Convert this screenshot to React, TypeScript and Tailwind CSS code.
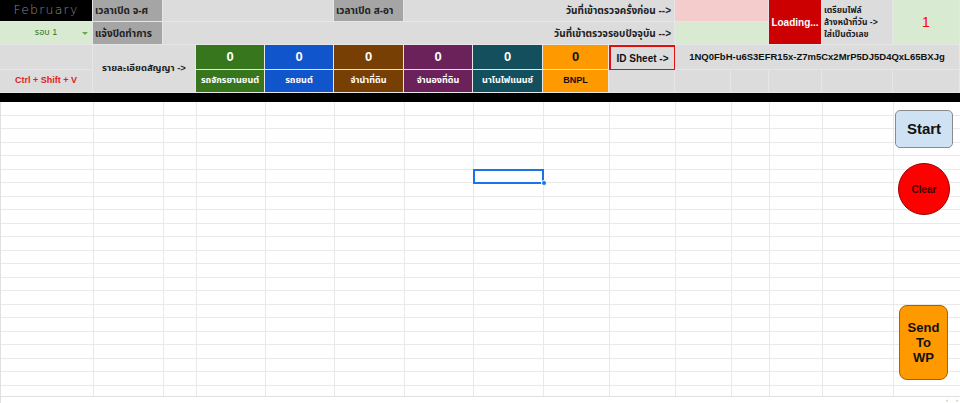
import React from "react";

const COLS =
  "grid grid-cols-[93px_70px_33px_69px_69px_70px_69px_70px_66px_66px_56px_38px_53px_71px_67px]";

const thai = {
  fontFamily:
    '"Liberation Sans", "Noto Sans Thai", "Noto Sans Thai UI", "Noto Sans", Loma, Garuda, "Tlwg Typo", Tahoma, sans-serif',
};

function Cell({
  className = "",
  children,
}: {
  className?: string;
  children?: React.ReactNode;
}) {
  return (
    <div
      className={
        "flex items-center overflow-hidden whitespace-nowrap border-r border-b border-[#e6e6e6] " +
        className
      }
    >
      {children}
    </div>
  );
}

export default function App() {
  const rows = Array.from({ length: 22 });
  const cols = Array.from({ length: 15 });
  return (
    <div
      className="relative w-[960px] h-[403px] overflow-hidden bg-white text-[#111]"
      style={thai}
    >
      {/* Header */}
      <div className={COLS + " grid-rows-[22px_23px_25px_23px_9px]"}>
        {/* Row 1 */}
        <Cell className="col-start-1 row-start-1 bg-black justify-center border-[#333]">
          <span
            className="text-[12.5px] tracking-[1.2px] text-[#8a8a8a]"
            style={{ fontFamily: '"DejaVu Sans", sans-serif', fontWeight: 300 }}
          >
            February
          </span>
        </Cell>
        <Cell className="col-start-2 row-start-1 bg-[#a5a5a5] pl-[2px]">
          <span className="text-[10px] font-bold text-[#222]">เวลาเปิด จ-ศ</span>
        </Cell>
        <Cell className="col-start-3 col-span-3 row-start-1 bg-[#dcdcdc]" />
        <Cell className="col-start-6 row-start-1 bg-[#a5a5a5] pl-[2px]">
          <span className="text-[10px] font-bold text-[#222]">เวลาเปิด ส-อา</span>
        </Cell>
        <Cell className="col-start-7 col-span-4 row-start-1 bg-[#dcdcdc] justify-end pr-[3px]">
          <span className="text-[10px] font-bold text-[#222]">
            วันที่เข้าตรวจครั้งก่อน --&gt;
          </span>
        </Cell>
        <Cell className="col-start-11 col-span-2 row-start-1 bg-[#f4cccc]" />
        <Cell className="col-start-13 row-start-1 row-span-2 bg-[#cc0000] justify-center">
          <span className="text-[10px] font-bold text-white">Loading...</span>
        </Cell>
        <Cell className="col-start-14 row-start-1 row-span-2 bg-[#dcdcdc] pl-[2px]">
          <span className="text-[8.5px] font-bold leading-[12px] text-[#222] whitespace-normal">
            เตรียมไฟล์
            <br />
            ล้างหน้าที่วัน -&gt;
            <br />
            ใส่เป็นตัวเลข
          </span>
        </Cell>
        <Cell className="col-start-15 row-start-1 row-span-2 bg-[#d9ead3] justify-center">
          <span className="text-[14px] text-[#ff0000]">1</span>
        </Cell>

        {/* Row 2 */}
        <Cell className="col-start-1 row-start-2 bg-[#d9ead3] justify-center relative">
          <span className="text-[9px] text-[#38761d]">รอบ 1</span>
          <span className="absolute right-[4px] top-[10px] w-0 h-0 border-l-[3px] border-r-[3px] border-t-[3px] border-l-transparent border-r-transparent border-t-[#6aa84f]" />
        </Cell>
        <Cell className="col-start-2 row-start-2 bg-[#a5a5a5] pl-[2px]">
          <span className="text-[10px] font-bold text-[#222]">แจ้งปิดทำการ</span>
        </Cell>
        <Cell className="col-start-3 col-span-8 row-start-2 bg-[#dcdcdc] justify-end pr-[3px]">
          <span className="text-[10px] font-bold text-[#222]">
            วันที่เข้าตรวจรอบปัจจุบัน --&gt;
          </span>
        </Cell>
        <Cell className="col-start-11 col-span-2 row-start-2 bg-[#d9ead3]" />

        {/* Row 3 */}
        <Cell className="col-start-1 row-start-3 bg-[#dcdcdc]" />
        <Cell className="col-start-2 col-span-2 row-start-3 row-span-2 bg-[#dcdcdc] justify-center">
          <span className="text-[9.5px] font-bold text-[#222]">รายละเอียดสัญญา -&gt;</span>
        </Cell>
        <Cell className="col-start-4 row-start-3 bg-[#38761d] justify-center">
          <span className="text-[13px] font-bold text-white">0</span>
        </Cell>
        <Cell className="col-start-5 row-start-3 bg-[#1155cc] justify-center">
          <span className="text-[13px] font-bold text-white">0</span>
        </Cell>
        <Cell className="col-start-6 row-start-3 bg-[#783f04] justify-center">
          <span className="text-[13px] font-bold text-white">0</span>
        </Cell>
        <Cell className="col-start-7 row-start-3 bg-[#6b2159] justify-center">
          <span className="text-[13px] font-bold text-white">0</span>
        </Cell>
        <Cell className="col-start-8 row-start-3 bg-[#134f5c] justify-center">
          <span className="text-[13px] font-bold text-white">0</span>
        </Cell>
        <Cell className="col-start-9 row-start-3 bg-[#ff9900] justify-center">
          <span className="text-[13px] font-bold text-[#111]">0</span>
        </Cell>
        <Cell className="col-start-10 row-start-3 bg-[#dcdcdc] justify-center border-2 border-[color:#e01010]">
          <span className="text-[10px] font-bold text-[#111]">ID Sheet -&gt;</span>
        </Cell>
        <Cell className="col-start-11 col-span-5 row-start-3 bg-[#dcdcdc] justify-center">
          <span className="text-[9.5px] font-bold text-[#111]">
            1NQ0FbH-u6S3EFR15x-Z7m5Cx2MrP5DJ5D4QxL65BXJg
          </span>
        </Cell>

        {/* Row 4 */}
        <Cell className="col-start-1 row-start-4 bg-[#dcdcdc] justify-center">
          <span className="text-[9px] font-bold text-[#e31b1b]">Ctrl + Shift + V</span>
        </Cell>
        <Cell className="col-start-4 row-start-4 bg-[#38761d] justify-center">
          <span className="text-[9px] font-bold text-white">รถจักรยานยนต์</span>
        </Cell>
        <Cell className="col-start-5 row-start-4 bg-[#1155cc] justify-center">
          <span className="text-[9px] font-bold text-white">รถยนต์</span>
        </Cell>
        <Cell className="col-start-6 row-start-4 bg-[#783f04] justify-center">
          <span className="text-[9px] font-bold text-white">จำนำที่ดิน</span>
        </Cell>
        <Cell className="col-start-7 row-start-4 bg-[#6b2159] justify-center">
          <span className="text-[9px] font-bold text-white">จำนองที่ดิน</span>
        </Cell>
        <Cell className="col-start-8 row-start-4 bg-[#134f5c] justify-center">
          <span className="text-[9px] font-bold text-white">นาโนไฟแนนซ์</span>
        </Cell>
        <Cell className="col-start-9 row-start-4 bg-[#ff9900] justify-center">
          <span className="text-[9px] font-bold text-[#111]">BNPL</span>
        </Cell>
        <Cell className="col-start-10 row-start-4 bg-[#dcdcdc]" />
        <Cell className="col-start-11 row-start-4 bg-[#dcdcdc]" />
        <Cell className="col-start-12 row-start-4 bg-[#dcdcdc]" />
        <Cell className="col-start-13 row-start-4 bg-[#dcdcdc]" />
        <Cell className="col-start-14 row-start-4 bg-[#dcdcdc]" />
        <Cell className="col-start-15 row-start-4 bg-[#dcdcdc]" />

        {/* Row 5 black */}
        <div className="col-start-1 col-span-15 row-start-5 bg-black" />
      </div>

      {/* Body grid */}
      <div className="relative h-[294px] overflow-hidden border-l border-[#e0e0e0]">
        {rows.map((_, r) => (
          <div key={r} className={COLS + " h-[13.5px]"}>
            {cols.map((_, c) => (
              <div key={c} className="border-r border-b border-[#e9e9e9]" />
            ))}
          </div>
        ))}
        {/* selected cell */}
        <div className="absolute left-[472px] top-[67px] w-[71px] h-[14.5px] border-2 border-solid border-[color:#1a73e8]" />
        <div className="absolute left-[539.5px] top-[78px] w-[6px] h-[6px] rounded-full bg-[#1a73e8] border border-white" />
      </div>

      {/* bottom bar */}
      <div className="flex h-[7px] justify-end items-center gap-[2px] pr-[2px] border-t border-[#e0e0e0] border-l">
        <span className="text-[6px] leading-[6px] text-[#999]">‹</span>
        <span className="text-[6px] leading-[6px] text-[#999] ml-[6px]">›</span>
      </div>

      {/* Drawing buttons */}
      <div className="absolute left-[895px] top-[110px] w-[58px] h-[38px] rounded-[5px] bg-[#cfe2f3] border border-[#8a8a8a] flex items-center justify-center">
        <span className="text-[15px] font-bold text-[#111]">Start</span>
      </div>
      <div className="absolute left-[898px] top-[163px] w-[52px] h-[52px] rounded-full bg-[#ff0000] border border-[#990000] flex items-center justify-center">
        <span className="text-[10px] font-bold text-[#3a0000]">Clear</span>
      </div>
      <div className="absolute left-[899px] top-[305px] w-[49px] h-[75px] rounded-[8px] bg-[#ff9900] border border-[#a86300] flex items-center justify-center">
        <span className="text-[13px] font-bold leading-[15px] text-[#111] text-center">
          Send
          <br />
          To
          <br />
          WP
        </span>
      </div>
    </div>
  );
}
